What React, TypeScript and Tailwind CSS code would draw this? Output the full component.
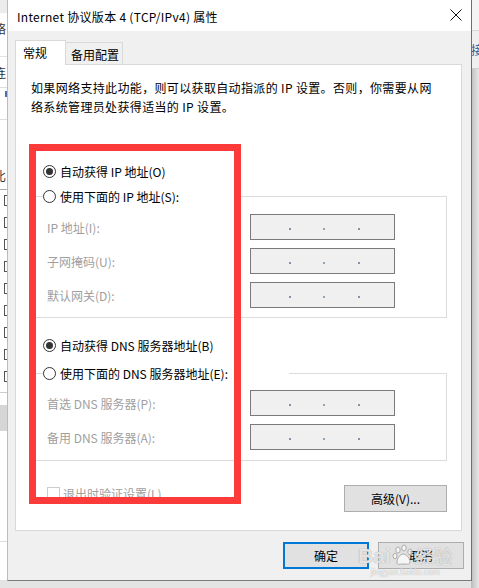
import React from 'react';

const font = '"Noto Sans CJK SC", "Noto Sans", sans-serif';

function Radio({ checked, label }: { checked?: boolean; label: string }) {
  return (
    <div className="flex items-center h-[22px]">
      <span className="w-[13px] h-[13px] rounded-full border border-[#333333] bg-white flex items-center justify-center shrink-0">
        {checked && <span className="w-[7px] h-[7px] rounded-full bg-[#333333]" />}
      </span>
      <span className="ml-[4px] text-black whitespace-nowrap">{label}</span>
    </div>
  );
}

function IpBox() {
  return (
    <div className="w-[145px] h-[26px] border border-[#7a7a7a] bg-[#f0f0f0] flex items-center pt-[4px] shrink-0">
      <span className="ml-[38px] w-[2px] h-[2px] bg-[#8a8fa6]" />
      <span className="ml-[32px] w-[2px] h-[2px] bg-[#8fa6b8]" />
      <span className="ml-[33px] w-[2px] h-[2px] bg-[#8a8fa6]" />
    </div>
  );
}

function Field({ label }: { label: string }) {
  return (
    <div className="flex items-center h-[26px]">
      <span className="w-[203px] text-[#a0a0a0] whitespace-nowrap">{label}</span>
      <IpBox />
    </div>
  );
}

function Button({ label, primary }: { label: string; primary?: boolean }) {
  return (
    <div
      className={
        primary
          ? 'w-[86px] h-[27px] border-2 border-[#0078d7] bg-[#e1e1e1] flex items-center justify-center text-black'
          : 'w-[86px] h-[27px] border border-[#adadad] bg-[#e1e1e1] flex items-center justify-center text-black'
      }
    >
      {label}
    </div>
  );
}

export default function App() {
  return (
    <div
      className="relative w-[479px] h-[588px] overflow-hidden bg-[#e4e4e4] text-[12px] leading-[19px]"
      style={{ fontFamily: font }}
    >
      {/* window behind, left edge */}
      <div className="absolute left-0 top-0 w-[7px] h-[580px] bg-white flex flex-col overflow-hidden text-[#333]">
        <div className="h-[13px] bg-[#ececec] shrink-0" />
        <div className="h-[30px] flex items-center -ml-[6px] whitespace-nowrap shrink-0">络</div>
        <div className="h-[14px] border-b border-[#e3e3e3] shrink-0" />
        <div className="h-[30px] flex items-center -ml-[6px] whitespace-nowrap shrink-0">连</div>
        <div className="h-[1px] bg-[#dddddd] shrink-0" />
        <div className="h-[12px] flex items-center shrink-0 pl-[5px]">
          <span className="w-[2px] h-[6px] bg-[#4a6fa5]" />
        </div>
        <div className="h-[20px] border-b border-[#dddddd] shrink-0" />
        <div className="h-[48px] shrink-0" />
        <div className="h-[14px] flex items-center -ml-[6px] whitespace-nowrap shrink-0">比</div>
        <div className="h-[8px] border-b border-[#aaaaaa] shrink-0" />
        <div className="flex flex-col gap-[11px] pt-[5px] pl-[4px] shrink-0">
          {[0, 1, 2, 3, 4, 5, 6, 7, 8].map((i) => (
            <span key={i} className="w-[8px] h-[11px] border border-[#555] bg-white" />
          ))}
        </div>
        <div className="h-[10px] shrink-0" />
        <div className="h-[1px] bg-[#cccccc] shrink-0" />
        <div className="h-[26px] bg-[#d6d6d6] shrink-0 mt-[12px]" />
        <div className="h-[30px] shrink-0" />
        <div className="h-[1px] bg-[#dddddd] shrink-0 mt-[80px]" />
      </div>

      {/* window behind, right edge (shadow) */}
      <div className="absolute right-0 top-0 w-[8px] h-[588px] bg-gradient-to-r from-[#bdbdbd] to-[#e8e8e8] flex flex-col">
        <div className="h-[31px] bg-[#f4f4f4] border-b border-[#d8d8d8] shrink-0" />
        <div className="h-[38px] flex items-center overflow-hidden text-[#2a5a9a] shrink-0 border-b border-[#d0d0d0] bg-[#efefef]">
          <span className="whitespace-nowrap">接</span>
        </div>
      </div>

      {/* dialog */}
      <div className="absolute left-[7px] top-0 w-[465px] h-[581px] bg-[#f0f0f0] border-l border-r border-b border-l-[#bcbcbc] border-r-[#6e6e6e] border-b-[#7a7a7a] flex flex-col">
        {/* title bar */}
        <div className="h-[31px] bg-white flex items-center justify-between pl-[9px] pr-[9px] shrink-0">
          <span className="text-black text-[12px] tracking-[0.3px] mt-[1px]">Internet 协议版本 4 (TCP/IPv4) 属性</span>
          <svg width="12" height="12" viewBox="0 0 12 12" className="mt-[-1px]">
            <path d="M0.5 0.5 L11.5 11.5 M11.5 0.5 L0.5 11.5" stroke="#111" strokeWidth="1" />
          </svg>
        </div>

        {/* tabs */}
        <div className="flex items-end ml-[7px] mt-[9px] h-[24px] shrink-0">
          <div className="relative z-10 h-[25px] -mb-px w-[51px] bg-white border border-b-0 border-[#d9d9d9] pl-[7px] pt-[2px] text-black">
            常规
          </div>
          <div className="h-[22px] w-[58px] -ml-px border border-b-0 border-[#d9d9d9] bg-[#f0f0f0] pl-[5px] pt-[2px] text-black">
            备用配置
          </div>
        </div>

        {/* panel */}
        <div className="ml-[7px] w-[447px] h-[467px] bg-white border border-[#d9d9d9] pl-[15px] pr-[14px] pt-[13px] flex flex-col shrink-0">
          <p className="text-black tracking-[0.35px] whitespace-nowrap">
            如果网络支持此功能，则可以获取自动指派的 IP 设置。否则，你需要从网
            <br />
            络系统管理员处获得适当的 IP 设置。
          </p>

          <div className="mt-[44px] ml-[12px]">
            <Radio checked label="自动获得 IP 地址(O)" />
          </div>

          <fieldset className="mt-[3px] border border-[#dcdcdc] pb-[9px]">
            <legend className="ml-[11px] w-[196px] h-[22px] p-0">
              <Radio label="使用下面的 IP 地址(S):" />
            </legend>
            <div className="flex flex-col gap-[8px] pl-[15px] pt-[7px]">
              <Field label="IP 地址(I):" />
              <Field label="子网掩码(U):" />
              <Field label="默认网关(D):" />
            </div>
          </fieldset>

          <div className="mt-[16px] ml-[12px]">
            <Radio checked label="自动获得 DNS 服务器地址(B)" />
          </div>

          <fieldset className="mt-[6px] border border-[#dcdcdc] pb-[10px]">
            <legend className="ml-[11px] w-[246px] h-[22px] p-0">
              <Radio label="使用下面的 DNS 服务器地址(E):" />
            </legend>
            <div className="flex flex-col gap-[8px] pl-[15px] pt-[6px]">
              <Field label="首选 DNS 服务器(P):" />
              <Field label="备用 DNS 服务器(A):" />
            </div>
          </fieldset>

          <div className="mt-[24px] flex items-start justify-between">
            <div className="flex items-center h-[14px] mt-[1px] pl-[16px]">
              <span className="w-[13px] h-[13px] border border-[#cccccc] bg-white" />
              <span className="ml-[3px] text-[#a0a0a0]">退出时验证设置(L)</span>
            </div>
            <div className="w-[103px] h-[27px] border border-[#adadad] bg-[#e1e1e1] flex items-center justify-center text-black">
              高级(V)...
            </div>
          </div>
        </div>

        {/* dialog buttons */}
        <div className="mt-[11px] flex justify-end gap-[9px] pr-[7px]">
          <Button primary label="确定" />
          <Button label="取消" />
        </div>
      </div>

      {/* red annotation box */}
      <div className="absolute left-[29px] top-[144px] w-[212px] h-[360px] border-[7px] border-[#fc3a3a]" />

      {/* baidu watermark */}
      <div className="absolute left-[358px] top-[543px] flex flex-col items-center pointer-events-none">
        <div className="flex items-center h-[24px] text-[rgba(255,255,255,0.75)] [text-shadow:0_0_1px_#8c8c8c]">
          <span className="text-[21px] font-bold leading-none" style={{ fontFamily: '"Liberation Sans", sans-serif' }}>
            Bai
          </span>
          <svg width="22" height="22" viewBox="0 0 22 22" className="mx-[1px]">
            <g fill="rgba(255,255,255,0.7)" stroke="#9a9a9a" strokeWidth="0.8">
              <ellipse cx="6" cy="6" rx="2.2" ry="3" />
              <ellipse cx="12" cy="4" rx="2.2" ry="3" />
              <ellipse cx="18" cy="8" rx="2.2" ry="3" />
              <ellipse cx="3" cy="12" rx="2" ry="2.6" />
              <path d="M5 19 C5 13 9 10 11 10 C14 10 18 14 18 18 C18 21 14 20 11 20 C8 20 5 21 5 19 Z" />
            </g>
          </svg>
          <span className="text-[19px] leading-none">经验</span>
        </div>
        <span className="text-[8px] leading-[9px] text-[rgba(255,255,255,0.8)] [text-shadow:0_0_1px_#9a9a9a]">
          jingyan.baidu.com
        </span>
      </div>
    </div>
  );
}
